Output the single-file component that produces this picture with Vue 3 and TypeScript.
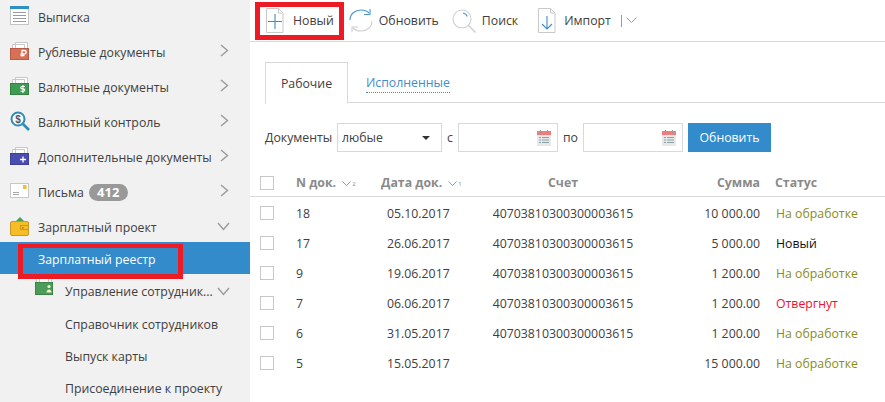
<script setup lang="ts">
interface Doc {
  num: string;
  date: string;
  account: string;
  sum: string;
  status: string;
  kind: string;
}

const docs: Doc[] = [
  { num: '18', date: '05.10.2017', account: '40703810300300003615', sum: '10 000.00', status: 'На обработке', kind: 'work' },
  { num: '17', date: '26.06.2017', account: '40703810300300003615', sum: '5 000.00', status: 'Новый', kind: 'new' },
  { num: '9', date: '19.06.2017', account: '40703810300300003615', sum: '1 200.00', status: 'На обработке', kind: 'work' },
  { num: '7', date: '06.06.2017', account: '40703810300300003615', sum: '1 200.00', status: 'Отвергнут', kind: 'rejected' },
  { num: '6', date: '31.05.2017', account: '40703810300300003615', sum: '1 200.00', status: 'На обработке', kind: 'work' },
  { num: '5', date: '15.05.2017', account: '', sum: '15 000.00', status: 'На обработке', kind: 'work' },
];
</script>

<template>
  <div class="page">
    <aside class="side">
      <div class="item">
        <svg class="ico" width="20" height="20" viewBox="0 0 20 20">
          <rect x="0.5" y="0.5" width="18" height="18" fill="#fff" stroke="#c4c4c4" />
          <rect x="0" y="0" width="19" height="3" fill="#2f8fc4" />
          <path d="M3 6.5h13M3 9.5h13M3 12.5h13M3 15.5h13" stroke="#9a9a9a" />
        </svg>
        <span class="label">Выписка</span>
      </div>
      <div class="item">
        <svg class="ico" width="20" height="20" viewBox="0 0 20 20">
          <path d="M2.5 3.5h12v6h-12zM5.5 1.500h12v6h-12z" fill="#fff" stroke="#c6c6c6" />
          <rect x="0.5" y="7.5" width="18" height="11" fill="#d96f55" stroke="#b85a44" />
          <path d="M12 15.500v-6h2.500a1.700 1.700 0 0 1 0 3.400H10.500M10.500 14.500h4" fill="none" stroke="#fff" stroke-width="1.300" />
        </svg>
        <span class="label">Рублевые документы</span>
        <svg class="arrow" width="9" height="13" viewBox="0 0 9 13"><path d="M1 1l6.500 5.500L1 12" fill="none" stroke="#9a9a9a" stroke-width="1.400" /></svg>
      </div>
      <div class="item">
        <svg class="ico" width="20" height="20" viewBox="0 0 20 20">
          <path d="M2.5 3.5h12v6h-12zM5.5 1.500h12v6h-12z" fill="#fff" stroke="#c6c6c6" />
          <rect x="0.5" y="7.5" width="18" height="11" fill="#3f9a52" stroke="#34823f" />
          <path d="M15 10.500h-3a1.200 1.200 0 0 0 0 2.400h1.500a1.200 1.200 0 0 1 0 2.400h-3M13 9v8" fill="none" stroke="#fff" stroke-width="1.100" />
        </svg>
        <span class="label">Валютные документы</span>
        <svg class="arrow" width="9" height="13" viewBox="0 0 9 13"><path d="M1 1l6.500 5.500L1 12" fill="none" stroke="#9a9a9a" stroke-width="1.400" /></svg>
      </div>
      <div class="item">
        <svg class="ico" width="20" height="20" viewBox="0 0 20 20">
          <circle cx="8" cy="8" r="6.500" fill="#fff" stroke="#2b8db8" stroke-width="2" />
          <path d="M13 13l6 6" stroke="#2b8db8" stroke-width="2.600" />
          <text x="8" y="11.500" font-size="10" font-family="Liberation Sans, sans-serif" font-weight="700" text-anchor="middle" fill="#555">$</text>
        </svg>
        <span class="label">Валютный контроль</span>
        <svg class="arrow" width="9" height="13" viewBox="0 0 9 13"><path d="M1 1l6.500 5.500L1 12" fill="none" stroke="#9a9a9a" stroke-width="1.400" /></svg>
      </div>
      <div class="item">
        <svg class="ico" width="20" height="20" viewBox="0 0 20 20">
          <path d="M2.5 3.5h12v6h-12zM5.5 1.500h12v6h-12z" fill="#fff" stroke="#c6c6c6" />
          <rect x="0.5" y="7.500" width="18" height="11" fill="#4a4db0" stroke="#3d4096" />
          <path d="M10 13.500h6M13 10.500v6" stroke="#fff" stroke-width="1.300" />
        </svg>
        <span class="label">Дополнительные документы</span>
        <svg class="arrow" width="9" height="13" viewBox="0 0 9 13"><path d="M1 1l6.500 5.500L1 12" fill="none" stroke="#9a9a9a" stroke-width="1.400" /></svg>
      </div>
      <div class="item">
        <svg class="ico" width="20" height="20" viewBox="0 0 20 20">
          <rect x="0.500" y="2.500" width="18" height="14" fill="#fff" stroke="#c8c8c8" />
          <rect x="13" y="4" width="3.500" height="4" fill="#f4bd2c" />
          <path d="M3 11.500h6M3 13.500h6" stroke="#a8a8a8" />
        </svg>
        <span class="label">Письма</span>
        <span class="badge">412</span>
        <svg class="arrow" width="9" height="13" viewBox="0 0 9 13"><path d="M1 1l6.500 5.500L1 12" fill="none" stroke="#9a9a9a" stroke-width="1.400" /></svg>
      </div>
      <div class="item open">
        <svg class="ico" width="20" height="20" viewBox="0 0 20 20">
          <path d="M5 5l5-5 5 5z" fill="#4d9e58" />
          <rect x="0.500" y="4.500" width="18" height="14" rx="1.500" fill="#f6bd25" stroke="#c9962a" />
          <rect x="10.500" y="8.500" width="8" height="4" fill="#f6bd25" stroke="#c9962a" />
          <rect x="12" y="10" width="1.500" height="1.500" fill="#a87b1c" />
        </svg>
        <span class="label">Зарплатный проект</span>
        <svg class="arrow down" width="13" height="9" viewBox="0 0 13 9"><path d="M1 1l5.500 6.500L12 1" fill="none" stroke="#9a9a9a" stroke-width="1.400" /></svg>
      </div>
      <div class="active">Зарплатный реестр</div>
      <div class="sub-head">
        <svg class="sub-ico" width="19" height="18" viewBox="0 0 19 18">
          <path d="M1.500 0.500h12v7h-12zM4.500 0.500h12v7h-12z" fill="#fff" stroke="#c6c6c6" />
          <rect x="0.500" y="5.500" width="17" height="12" fill="#4a9c58" stroke="#3c8549" />
          <circle cx="14" cy="9.500" r="1.600" fill="#f3efc8" />
          <path d="M11.500 15.500c0-4 5-4 5 0z" fill="#f3efc8" />
        </svg>
        <span class="label">Управление сотрудник...</span>
        <svg class="arrow down" width="13" height="9" viewBox="0 0 13 9"><path d="M1 1l5.500 6.500L12 1" fill="none" stroke="#9a9a9a" stroke-width="1.400" /></svg>
      </div>
      <div class="sub">Справочник сотрудников</div>
      <div class="sub">Выпуск карты</div>
      <div class="sub">Присоединение к проекту</div>
      <div class="mark mark-side"></div>
    </aside>

    <main class="main">
      <div class="toolbar">
        <div class="tool tool-new">
          <svg width="18" height="25" viewBox="0 0 18 25">
            <path d="M0.500 0.500h12l4.500 4.500v19.500h-16.500z" fill="#fff" stroke="#c9c9c9" />
            <path d="M12.500 0.500v4.500h4.500" fill="none" stroke="#c9c9c9" />
            <path d="M9 6v15M2 13.500h14" stroke="#3a8ecb" stroke-width="1.100" />
          </svg>
          <span class="tool-text">Новый</span>
        </div>
        <div class="tool tool-refresh">
          <svg width="24" height="25" viewBox="0 0 24 25">
            <path d="M1 12C1 6 6 2 12 2c3 0 6 1 8 3" fill="none" stroke="#4a96d2" stroke-width="1.100" />
            <path d="M15 6.500h6V1" fill="none" stroke="#4a96d2" stroke-width="1.100" />
            <path d="M23 13c0 6-5 10-11 10-3 0-6-1-8-3" fill="none" stroke="#cfcfcf" stroke-width="1.100" />
            <path d="M9 19H3v5" fill="none" stroke="#cfcfcf" stroke-width="1.100" />
          </svg>
          <span class="tool-text">Обновить</span>
        </div>
        <div class="tool tool-search">
          <svg width="24" height="25" viewBox="0 0 24 25">
            <circle cx="10" cy="11" r="9" fill="none" stroke="#cfcfcf" stroke-width="1.100" />
            <path d="M16.500 17.500l7 7" stroke="#cfcfcf" stroke-width="1.400" />
            <path d="M11 5c2 .3 3.500 1.500 4.300 3.500" fill="none" stroke="#4a96d2" stroke-width="1.100" />
          </svg>
          <span class="tool-text">Поиск</span>
        </div>
        <div class="tool tool-import">
          <svg width="18" height="25" viewBox="0 0 18 25">
            <path d="M0.500 0.500h12l4.500 4.500v19.500h-16.500z" fill="#fff" stroke="#c9c9c9" />
            <path d="M12.500 0.500v4.500h4.500" fill="none" stroke="#c9c9c9" />
            <path d="M9 8v13M4 16l5 5 5-5" fill="none" stroke="#3a8ecb" stroke-width="1.100" />
          </svg>
          <span class="tool-text">Импорт</span>
          <span class="split"></span>
          <svg width="11" height="7" viewBox="0 0 11 7"><path d="M0.500 0.500l5 5 5-5" fill="none" stroke="#9a9a9a" /></svg>
        </div>
        <div class="mark mark-top"></div>
      </div>

      <div class="tabs">
        <div class="tab">Рабочие</div>
        <div class="tab-link"><span>Исполненные</span></div>
      </div>

      <div class="filter">
        <span class="f-label">Документы</span>
        <div class="select">
          <span>любые</span>
          <i class="caret"></i>
        </div>
        <span class="f-sep">с</span>
        <div class="date">
          <svg width="14" height="16" viewBox="0 0 14 16">
            <rect x="0" y="1" width="14" height="15" fill="#e8e8e8" />
            <rect x="0" y="1" width="14" height="4" fill="#ef7d7d" />
            <path d="M3.500 0v3M10.500 0v3" stroke="#999" />
            <path d="M2 7.500h2M5 7.500h7M2 10h2M5 10h7M2 12.500h2M5 12.500h7" stroke="#8aa0a8" />
          </svg>
        </div>
        <span class="f-sep by">по</span>
        <div class="date">
          <svg width="14" height="16" viewBox="0 0 14 16">
            <rect x="0" y="1" width="14" height="15" fill="#e8e8e8" />
            <rect x="0" y="1" width="14" height="4" fill="#ef7d7d" />
            <path d="M3.500 0v3M10.500 0v3" stroke="#999" />
            <path d="M2 7.500h2M5 7.500h7M2 10h2M5 10h7M2 12.500h2M5 12.500h7" stroke="#8aa0a8" />
          </svg>
        </div>
        <button class="refresh">Обновить</button>
      </div>

      <div class="grid head">
        <i class="check"></i>
        <div class="th">N док.
          <svg width="9" height="5" viewBox="0 0 9 5"><path d="M0.500 0.500l4 4 4-4" fill="none" stroke="#999" /></svg><sup>2</sup>
        </div>
        <div class="th th-date">Дата док.
          <svg width="9" height="5" viewBox="0 0 9 5"><path d="M0.500 0.500l4 4 4-4" fill="none" stroke="#999" /></svg><sup>1</sup>
        </div>
        <div class="th th-acc">Счет</div>
        <div class="th th-sum">Сумма</div>
        <div class="th th-status">Статус</div>
      </div>

      <div v-for="d in docs" :key="d.num" class="grid row">
        <i class="check"></i>
        <div>{{ d.num }}</div>
        <div class="td-date">{{ d.date }}</div>
        <div class="td-acc">{{ d.account }}</div>
        <div class="td-sum">{{ d.sum }}</div>
        <div class="td-status" :class="d.kind">{{ d.status }}</div>
      </div>
    </main>
  </div>
</template>

<style>
html,
body {
  margin: 0;
  background: #fff;
  overflow: hidden;
}
</style>

<style scoped>
.page {
  display: flex;
  width: 885px;
  height: 402px;
  overflow: hidden;
  font-family: "Open Sans", "Noto Sans", sans-serif;
  font-size: 12.3px;
  color: #404040;
}

.side {
  position: relative;
  flex: 0 0 250px;
  background: #f1f1f1;
}

.item {
  box-sizing: border-box;
  display: flex;
  align-items: center;
  height: 35px;
  padding: 0 0 1px 10px;
}

.ico {
  flex: none;
  margin: -3px 8px 0 0;
}

.item.open .ico {
  margin-top: 0;
}

.label {
  white-space: nowrap;
}

.badge {
  box-sizing: border-box;
  width: 39px;
  height: 17px;
  margin-left: 5px;
  line-height: 17px;
  border-radius: 9px;
  background: #999;
  color: #fff;
  font-weight: 700;
  font-size: 13px;
  text-align: center;
}

.arrow {
  position: absolute;
  left: 220px;
  margin-top: -3px;
}

.arrow.down {
  left: 217px;
  margin-top: -1px;
}

.active {
  box-sizing: border-box;
  height: 32px;
  margin-top: -3px;
  padding: 4px 0 0 38px;
  line-height: 28px;
  background: #338bcb;
  color: #fff;
}

.sub-head {
  display: flex;
  align-items: center;
  height: 35px;
  padding-left: 35px;
}

.sub-ico {
  flex: none;
  margin: -11px 11px 0 0;
}

.sub {
  height: 32px;
  line-height: 32px;
  padding-left: 65px;
}

.mark {
  position: absolute;
  box-sizing: border-box;
  border: 5px solid #ed1c24;
  pointer-events: none;
}

.mark-side {
  left: 18px;
  top: 244px;
  width: 165px;
  height: 35px;
  border-top-width: 4px;
}

.mark-top {
  left: 5px;
  top: 2px;
  width: 89px;
  height: 38px;
}

.main {
  flex: 1;
  min-width: 0;
  background: #fff;
}

.toolbar {
  position: relative;
  display: flex;
  align-items: center;
  height: 41px;
  border-bottom: 1px solid #d9d9d9;
}

.tool {
  display: flex;
  align-items: center;
}

.tool-new {
  margin-left: 16px;
}

.tool-new .tool-text {
  margin-left: 9px;
}

.tool-refresh {
  margin-left: 15px;
}

.tool-search {
  margin-left: 13px;
}

.tool-import {
  margin-left: 20px;
}

.tool-text {
  margin-left: 6px;
}

.tool-import .tool-text {
  margin-left: 8px;
}

.split {
  width: 1px;
  height: 12px;
  margin: 0 4px 0 10px;
  background: #999;
}

.tabs {
  display: flex;
  height: 40px;
  margin: 20px 0 0 15px;
  border-bottom: 1px solid #d9d9d9;
}

.tab {
  width: 81px;
  height: 40px;
  line-height: 41px;
  text-align: center;
  background: #fff;
  border: 1px solid #d9d9d9;
  border-bottom: 1px solid #fff;
}

.tab-link {
  margin-left: 18px;
  line-height: 41px;
  color: #3f8dc9;
}

.tab-link span {
  border-bottom: 1px dotted #3f8dc9;
  padding-bottom: 1px;
}

.filter {
  display: flex;
  align-items: center;
  height: 29px;
  margin: 20px 0 0 15px;
}

.f-label {
  width: 72px;
}

.select {
  box-sizing: border-box;
  display: flex;
  align-items: center;
  justify-content: space-between;
  width: 105px;
  height: 29px;
  padding: 0 11px 0 4px;
  border: 1px solid #d9d9d9;
}

.caret {
  border: 4px solid transparent;
  border-top: 4px solid #333;
  border-bottom: 0;
}

.f-sep {
  width: 16px;
  text-align: center;
}

.f-sep.by {
  width: 25px;
}

.date {
  box-sizing: border-box;
  display: flex;
  align-items: center;
  justify-content: flex-end;
  width: 100px;
  height: 29px;
  padding-right: 6px;
  border: 1px solid #d9d9d9;
}

.refresh {
  width: 83px;
  height: 29px;
  margin-left: 5px;
  padding: 0;
  border: 0;
  background: #338bcb;
  color: #fff;
  font: inherit;
}

.grid {
  display: grid;
  grid-template-columns: 36px 80px 90px 192px 102px 1fr;
  align-items: center;
  padding-left: 10px;
}

.head {
  box-sizing: border-box;
  height: 30px;
  margin: 15px 0 1px;
  padding-top: 2px;
  border-bottom: 1px solid #d9d9d9;
  font-weight: 700;
  color: #8a8a8a;
}

.check {
  box-sizing: border-box;
  display: block;
  width: 14px;
  height: 14px;
  border: 1px solid #c8c8c8;
}

.th {
  white-space: nowrap;
}

.th svg {
  margin-left: 3px;
  vertical-align: 1px;
}

.th sup {
  font-size: 6px;
  font-weight: 400;
  vertical-align: 1px;
  margin-left: 1px;
}

.th-date {
  padding-left: 5px;
}

.th-acc {
  text-align: center;
  padding-left: 2px;
}

.th-sum {
  text-align: right;
}

.th-status {
  padding-left: 15px;
}

.row {
  height: 30px;
}

.td-date {
  padding-left: 11px;
}

.td-acc {
  text-align: center;
  padding-left: 2px;
}

.td-sum {
  text-align: right;
}

.td-status {
  padding-left: 16px;
}

.work {
  color: #8b8b1a;
}

.new {
  color: #111;
}

.rejected {
  color: #f0102a;
}
</style>
